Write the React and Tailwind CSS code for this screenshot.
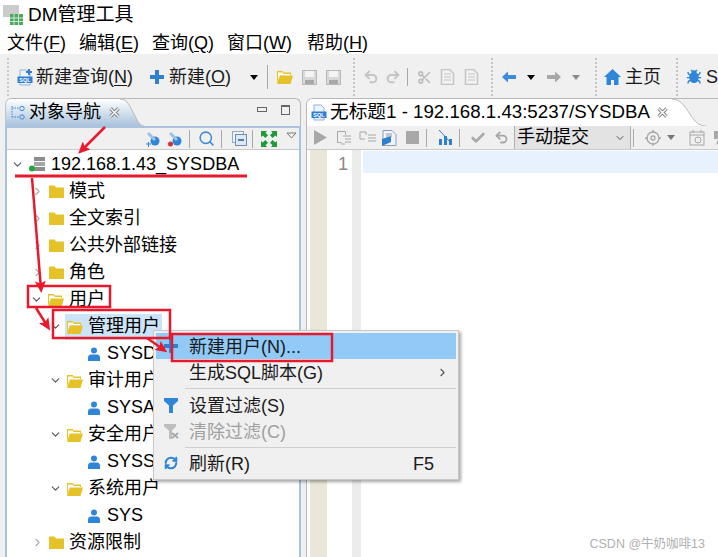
import React from 'react';
import { ChevronDown, ChevronRight, Bug, Check, Undo2, Redo2, Scissors, Search, RefreshCw } from 'lucide-react';

const FONT = "font-['Liberation_Sans','Noto_Sans_CJK_SC',sans-serif]";

const SqlDoc = ({ plus }) => (
  <svg width="16" height="17" viewBox="0 0 16 17" className="shrink-0">
    <path d="M3 1h7l3 3v12H3z" fill="#eef4fb" stroke="#8fb4dc" />
    <rect x="0.500" y="7.500" width="15" height="6.500" fill="#2f80d0" />
    <text x="8" y="12.600" fontSize="5.500" fontWeight="700" fill="#fff" textAnchor="middle" fontFamily="Liberation Sans">SQL</text>
    {plus && <path d="M12 0v6M9 3h6" stroke="#2f80d0" strokeWidth="2" />}
  </svg>
);

const Folder = ({ open }) =>
  open ? (
    <svg width="16" height="14" viewBox="0 0 16 14" className="shrink-0">
      <path d="M0 1h5.500l1.500 1.500h7V5H3L0 13z" fill="#e6c229" />
      <path d="M1 2.500h4.500l1.500 1.500h6v1H3l-2 5z" fill="#fff" />
      <path d="M0 14L3 5.500h13L13.500 14z" fill="#e6c229" />
    </svg>
  ) : (
    <svg width="15" height="13" viewBox="0 0 15 13" className="shrink-0">
      <path d="M0 0.500h5.500l1.500 2h8V13H0z" fill="#e6c229" />
    </svg>
  );

const UserIcon = () => (
  <svg width="12" height="14" viewBox="0 0 12 14" className="shrink-0">
    <circle cx="6" cy="3.500" r="3" fill="#2f86d8" />
    <path d="M0 14v-3.500C0 8.500 1.500 7.500 3 7.500h6c1.500 0 3 1 3 3V14z" fill="#2f86d8" />
  </svg>
);

const ServerIcon = () => (
  <svg width="16" height="15" viewBox="0 0 16 15" className="shrink-0">
    <rect x="5" y="0" width="11" height="4" fill="#8d8d8d" />
    <rect x="5" y="5" width="11" height="4" fill="#a6a6a6" />
    <rect x="5" y="10" width="11" height="4" fill="#8d8d8d" />
    <circle cx="3" cy="11.500" r="3" fill="#22a83a" />
  </svg>
);

const Floppy = ({ className }) => (
  <svg width="15" height="15" viewBox="0 0 15 15" className={className}>
    <rect x="0.500" y="0.500" width="14" height="14" fill="#d8d8d8" stroke="#b8b8b8" />
    <rect x="3" y="1" width="9" height="6" fill="#f4f4f4" />
    <rect x="3" y="10" width="9" height="4" fill="#a8a8a8" />
  </svg>
);

const DocLines = ({ className, stroke = '#c4c4c4' }) => (
  <svg width="15" height="16" viewBox="0 0 15 16" fill="#f2f2f2" stroke={stroke} className={className}>
    <path d="M1.500 0.500h8l4 4v11h-12z" strokeWidth="1.500" />
    <path d="M4 5h7M4 8h7M4 11h7" />
  </svg>
);

const Arrow = ({ className, fill, flip }) => (
  <svg width="14" height="12" viewBox="0 0 14 12" className={className}>
    <path d={flip ? 'M14 6L8 0.500V4H0v4h8v3.500z' : 'M0 6l6-5.500V4h8v4H6v3.500z'} fill={fill} />
  </svg>
);

const CloseX = ({ className }) => (
  <svg width="11" height="11" viewBox="0 0 11 11" className={className}>
    <path d="M1.500 1.500l8 8M9.500 1.500l-8 8" stroke="#808080" strokeWidth="3.200" />
    <path d="M1.500 1.500l8 8M9.500 1.500l-8 8" stroke="#fff" strokeWidth="1.400" />
  </svg>
);

const VSep = ({ className }) => <div className={`w-px h-[18px] bg-[#a8a8a8] shrink-0 ${className}`} />;
const Grip = ({ className }) => <div className={`w-0 h-[38px] border-l-2 border-dotted border-[#c6c6c6] shrink-0 ${className}`} />;
const Caret = ({ className, color = 'border-t-black' }) => (
  <div className={`w-0 h-0 border-x-[4.500px] border-x-transparent border-t-[5px] ${color} shrink-0 ${className}`} />
);

const Underlined = ({ pre, ch }) => (
  <>
    {pre}(<span className="underline underline-offset-2">{ch}</span>)
  </>
);

const TitleBar = () => (
  <div className="flex h-[27px] items-center pl-[3px] pt-[3px] gap-[5px] text-[19px] text-black">
    <svg width="20" height="20" viewBox="0 0 20 20">
      <rect x="0" y="0" width="16" height="12" fill="#b5b5b5" opacity="0.7" />
      <rect x="7" y="9" width="13" height="11" fill="#4fa860" />
      <path d="M7 13h13M7 16.500h13M11 9v11M15.500 9v11" stroke="#cfe8d4" />
    </svg>
    <span>DM管理工具</span>
  </div>
);

const MenuBar = () => (
  <div className="flex h-[27px] items-center pl-[7px] pt-[4px] gap-[13px] text-[18px] leading-none text-black">
    <span><Underlined pre="文件" ch="F" /></span>
    <span><Underlined pre="编辑" ch="E" /></span>
    <span><Underlined pre="查询" ch="Q" /></span>
    <span><Underlined pre="窗口" ch="W" /></span>
    <span className="ml-[2px]"><Underlined pre="帮助" ch="H" /></span>
  </div>
);

const MainToolbar = () => (
  <div className="flex h-[44px] items-center bg-[#f0f0f0] pl-[7px] pt-[2px] overflow-hidden text-[18px] text-[#1a1a1a] whitespace-nowrap">
    <Grip />
    <div className="ml-[8px]"><SqlDoc plus /></div>
    <span className="ml-[3px]"><Underlined pre="新建查询" ch="N" /></span>
    <svg className="ml-[17px] shrink-0" width="14" height="14" viewBox="0 0 14 14" fill="#2f80d0"><path d="M5 0h4v5h5v4H9v5H5V9H0V5h5z" /></svg>
    <span className="ml-[5px]"><Underlined pre="新建" ch="O" /></span>
    <Caret className="ml-[19px]" />
    <div className="w-px h-[24px] bg-[#a8a8a8] ml-[9px] shrink-0" />
    <div className="ml-[9px]"><Folder open /></div>
    <Floppy className="ml-[9px] shrink-0" />
    <Floppy className="ml-[9px] shrink-0" />
    <Grip className="ml-[12px]" />
    <Undo2 className="ml-[8px] text-[#c4c4c4] shrink-0" size={16} strokeWidth={3} />
    <Redo2 className="ml-[6px] text-[#c4c4c4] shrink-0" size={16} strokeWidth={3} />
    <VSep className="ml-[6px]" />
    <Scissors className="ml-[9px] text-[#bcbcbc] shrink-0" size={15} strokeWidth={2.500} />
    <DocLines className="ml-[8px] shrink-0" />
    <DocLines className="ml-[9px] shrink-0" />
    <Grip className="ml-[12px]" />
    <Arrow className="ml-[9px] shrink-0" fill="#3d8bdc" />
    <Caret className="ml-[11px]" />
    <Arrow className="ml-[12px] shrink-0" fill="#a8a8a8" flip />
    <Caret className="ml-[11px]" color="border-t-[#8a8a8a]" />
    <Grip className="ml-[15px]" />
    <svg className="ml-[7px] shrink-0" width="17" height="16" viewBox="0 0 17 16" fill="#2f86d8"><path d="M8.500 0L17 8h-2.500v8H10v-5H7v5H2.500V8H0z" /></svg>
    <span className="ml-[4px]">主页</span>
    <Grip className="ml-[15px]" />
    <Bug className="ml-[8px] text-[#2f86d8] shrink-0" size={16} fill="#2f86d8" />
    <span className="ml-[4px]">S</span>
  </div>
);

const NavPanel = ({ children }) => (
  <div className="w-[296px] shrink-0 flex flex-col ml-[5px]">
    <div className="flex h-[28px] border-t border-r border-[#b8b8b8] rounded-t-[6px]">
      <div className="flex h-full w-[115px] items-center gap-[3px] pl-[4px] rounded-tl-[6px] border-l border-[#b9c6d6] bg-gradient-to-b from-white to-[#a9c3dd] text-[18px] text-black shrink-0">
        <svg width="16" height="16" viewBox="0 0 16 16" fill="none" stroke="#3d8bdc" className="shrink-0">
          <path d="M2 1v11M2 3h7M2 12h7" strokeDasharray="1.500 1" />
          <circle cx="12" cy="3.500" r="2.200" />
          <circle cx="12" cy="12" r="2.200" />
        </svg>
        <span>对象导航</span>
        <CloseX className="ml-[5px] shrink-0" />
      </div>
      <svg width="24" height="27" viewBox="0 0 24 27" className="shrink-0">
        <defs>
          <linearGradient id="navtab" x1="0" y1="0" x2="0" y2="1">
            <stop offset="0" stopColor="#fff" />
            <stop offset="1" stopColor="#a9c3dd" />
          </linearGradient>
        </defs>
        <path d="M0 0C8 0 10 8 14 15C18 23 20 27 24 27H0z" fill="url(#navtab)" />
        <path d="M0 0C8 0 10 8 14 15C18 23 20 27 24 27" fill="none" stroke="#b8b8b8" />
      </svg>
      <div className="flex-1 flex h-full items-center justify-end gap-[14px] pr-[10px] pb-[6px]">
        <div className="w-[10px] h-[5px] border border-[#666]" />
        <div className="w-[9px] h-[10px] border border-[#666] border-t-2" />
      </div>
    </div>
    <div className="flex-1 flex flex-col border-x-[2px] border-t-[2px] border-[#a9c3dd] bg-white min-h-0">
      <div className="flex h-[22px] items-center justify-end pr-[2px] bg-[#f0f0f0] border-b border-[#c8c8c8]">
        <svg width="16" height="16" viewBox="0 0 16 16"><circle cx="10" cy="10" r="4.500" fill="#2f86d8" /><path d="M3 2l7 7" stroke="#9bc2e8" strokeWidth="3" /><path d="M1 13h5M3.500 11v5" stroke="#2f86d8" /></svg>
        <svg className="ml-[6px]" width="16" height="16" viewBox="0 0 16 16"><circle cx="10" cy="10" r="4.500" fill="#2f86d8" /><path d="M3 2l7 7" stroke="#9bc2e8" strokeWidth="3" /><circle cx="3.500" cy="13" r="2.500" fill="#d43040" /></svg>
        <VSep className="ml-[6px]" />
        <Search size={17} className="ml-[8px] text-[#3d8bdc]" strokeWidth={2.200} />
        <VSep className="ml-[6px]" />
        <svg className="ml-[10px]" width="15" height="15" viewBox="0 0 15 15"><rect x="0.500" y="0.500" width="11" height="11" fill="#eef4fb" stroke="#8fa8c4" /><rect x="3.500" y="3.500" width="11" height="11" fill="#dbe8f5" stroke="#6f8fb0" /><path d="M6 9h6" stroke="#2a5a8a" strokeWidth="1.500" /></svg>
        <VSep className="ml-[5px]" />
        <svg className="ml-[8px]" width="16" height="16" viewBox="0 0 16 16" fill="#1f9a35"><path d="M0 0h6L4.500 1.800 7 4.300 4.300 7 1.800 4.500 0 6zM16 0v6l-1.800-1.500L11.700 7 9 4.300l2.500-2.500L10 0zM0 16v-6l1.800 1.500L4.300 9 7 11.700l-2.500 2.500L6 16zM16 16h-6l1.500-1.800L9 11.700 11.700 9l2.500 2.500L16 10z" /></svg>
        <svg className="ml-[9px] mb-[7px]" width="11" height="7" viewBox="0 0 11 7" fill="none" stroke="#777"><path d="M1 1h9L5.500 6z" /></svg>
      </div>
      {children}
    </div>
  </div>
);

const TreeRow = ({ indent, arrow, icon, label, selected, gap = 'gap-[5px]' }) => (
  <div className="flex h-[27px] items-center whitespace-nowrap text-[18px] text-black" style={{ paddingLeft: indent }}>
    <span className="w-[14px] flex justify-center shrink-0">
      {arrow === 'down' && <ChevronDown size={13} className="text-[#555]" strokeWidth={2} />}
      {arrow === 'right' && <ChevronRight size={13} className="text-[#aaa]" strokeWidth={2} />}
    </span>
    <span className={`ml-[3px] flex items-center h-[26px] pl-[2px] pr-[2px] ${gap} ${selected ? 'bg-[#cce4f7]' : ''}`}>
      {icon}
      <span>{label}</span>
    </span>
  </div>
);

const Tree = () => (
  <div className="flex flex-col pt-[1px] overflow-hidden">
    <TreeRow indent={3} arrow="down" gap="gap-[6px]" icon={<ServerIcon />} label="192.168.1.43_SYSDBA" />
    <TreeRow indent={23} arrow="right" icon={<Folder />} label="模式" />
    <TreeRow indent={23} arrow="right" icon={<Folder />} label="全文索引" />
    <TreeRow indent={23} arrow="right" icon={<Folder />} label="公共外部链接" />
    <TreeRow indent={23} arrow="right" icon={<Folder />} label="角色" />
    <TreeRow indent={22} arrow="down" icon={<Folder open />} label="用户" />
    <TreeRow indent={41} arrow="down" selected icon={<Folder open />} label="管理用户" />
    <TreeRow indent={62} gap="gap-[7px]" icon={<UserIcon />} label="SYSDBA" />
    <TreeRow indent={41} arrow="down" icon={<Folder open />} label="审计用户" />
    <TreeRow indent={62} gap="gap-[7px]" icon={<UserIcon />} label="SYSAUD" />
    <TreeRow indent={41} arrow="down" icon={<Folder open />} label="安全用户" />
    <TreeRow indent={62} gap="gap-[7px]" icon={<UserIcon />} label="SYSSSO" />
    <TreeRow indent={41} arrow="down" icon={<Folder open />} label="系统用户" />
    <TreeRow indent={62} gap="gap-[7px]" icon={<UserIcon />} label="SYS" />
    <TreeRow indent={23} arrow="right" icon={<Folder />} label="资源限制" />
  </div>
);

const EditorPanel = () => (
  <div className="flex-1 min-w-0 flex flex-col ml-[5px] border-l border-[#b8b8b8] rounded-tl-[6px]">
    <div className="flex h-[28px] border-t border-[#b8b8b8] rounded-tl-[6px] overflow-hidden">
      <div className="flex h-full w-[365px] items-center pl-[4px] gap-[3px] bg-white text-[18.700px] text-black whitespace-nowrap shrink-0">
        <SqlDoc />
        <span>无标题1 - 192.168.1.43:5237/SYSDBA</span>
        <CloseX className="ml-[4px] shrink-0" />
      </div>
      <svg width="34" height="27" viewBox="0 0 34 27" className="shrink-0">
        <path d="M0 0C10 0 14 10 20 18C24 24 28 27 34 27H0z" fill="#fff" />
        <path d="M0 0C10 0 14 10 20 18C24 24 28 27 34 27" fill="none" stroke="#b8b8b8" />
      </svg>
    </div>
    <div className="flex h-[24px] items-center bg-[#f0f0f0] border-b border-[#c8c8c8] pl-[7px] whitespace-nowrap overflow-hidden">
      <svg width="13" height="15" viewBox="0 0 13 15" fill="#a8a8a8" className="shrink-0"><path d="M0 0l13 7.500L0 15z" /></svg>
      <svg className="ml-[9px] shrink-0" width="16" height="16" viewBox="0 0 16 16" fill="none" stroke="#a8a8a8"><path d="M1.500 1.500h8v3M1.500 1.500v11h4M7 6h8M9 9h6M9 12h6M5 14h4" /></svg>
      <svg className="ml-[7px] shrink-0" width="18" height="14" viewBox="0 0 18 14" fill="none" stroke="#a8a8a8"><path d="M1 1h6v3M1 1v7h5M9 4h8M9 7h8M9 10h8" /></svg>
      <svg className="ml-[5px] shrink-0" width="15" height="16" viewBox="0 0 15 16"><path d="M1 0.500h9l4 4v11H1z" fill="#f0f4f8" stroke="#8a9db5" /><path d="M0 9l9-3v6l-9 4z" fill="#2f80d0" /><path d="M4 4h6M4 6h6" stroke="#8a9db5" /></svg>
      <div className="ml-[9px] w-[13px] h-[13px] bg-[#a8a8a8] shrink-0" />
      <VSep className="ml-[7px]" />
      <svg className="ml-[11px] shrink-0" width="15" height="15" viewBox="0 0 15 15" fill="#2f80d0"><rect x="1" y="9" width="3" height="6" /><rect x="6" y="6" width="3" height="9" /><rect x="11" y="9" width="3" height="6" /><path d="M1 0l13 14" stroke="#2f80d0" /></svg>
      <VSep className="ml-[6px]" />
      <Check size={16} className="ml-[10px] text-[#a8a8a8] shrink-0" strokeWidth={4} />
      <Undo2 size={15} className="ml-[8px] text-[#a8a8a8] shrink-0" strokeWidth={3} />
      <div className="ml-[5px] flex h-[23px] w-[117px] items-center justify-between pl-[2px] pr-[3px] bg-[#e3e3e3] border-x border-[#b0b0b0] text-[18px] text-black shrink-0">
        <span>手动提交</span>
        <ChevronDown size={12} className="text-[#555] mr-[1px]" />
      </div>
      <VSep className="ml-[2px]" />
      <svg className="ml-[11px] shrink-0" width="16" height="16" viewBox="0 0 16 16" fill="none" stroke="#a8a8a8" strokeWidth="1.300"><circle cx="8" cy="8" r="6" /><circle cx="8" cy="8" r="2" /><path d="M8 0v3M8 13v3M0 8h3M13 8h3" /></svg>
      <Caret className="ml-[6px]" color="border-t-[#777]" />
      <svg className="ml-[14px] shrink-0" width="16" height="16" viewBox="0 0 16 16" fill="none" stroke="#a8a8a8"><rect x="1" y="2" width="14" height="13" /><path d="M1 5h14M4 0v3M12 0v3" /><circle cx="9" cy="10" r="3" /></svg>
      <svg className="ml-[7px] shrink-0" width="12" height="14" viewBox="0 0 12 14" fill="#a8a8a8"><path d="M2 0h10L9 7h3l-8 7 2-6H2z" /></svg>
    </div>
    <div className="flex-1 flex bg-white pl-[3px]">
      <div className="w-[17px] bg-[#eae7d8] shrink-0" />
      <div className="w-[25px] shrink-0 flex justify-end items-start pt-[1px] pr-[4px] text-[18px] text-[#8a8a8a]">1</div>
      <div className="w-[9px] bg-[#ececec] shrink-0" />
      <div className="flex-1 flex flex-col pl-[2px]">
        <div className="h-[22px] mt-[1px] bg-[#e8f2fe]" />
      </div>
    </div>
  </div>
);

const MenuItem = ({ icon, label, right, disabled, active }) => (
  <div className={`flex h-[26px] items-center whitespace-nowrap text-[18px] ${disabled ? 'text-[#a0a0a0]' : 'text-[#1a1a1a]'} ${active ? 'bg-[#91c9f7]' : ''}`}>
    <span className="w-[30px] flex justify-center shrink-0">{icon}</span>
    <span className="ml-[3px] pt-[2px] flex-1">{label}</span>
    {right}
  </div>
);

const ContextMenu = () => (
  <div className="absolute left-[153px] top-[330px] w-[306px] h-[150px] bg-[#f0f0f0] border border-[#c8c8c8] shadow-[2px_2px_3px_rgba(0,0,0,0.35)] px-[2px] pt-[2px]">
    <MenuItem active label="新建用户(N)..." icon={<svg width="14" height="14" viewBox="0 0 14 14" fill="#2f80d0"><path d="M5 0h4v5h5v4H9v5H5V9H0V5h5z" /></svg>} />
    <MenuItem label="生成SQL脚本(G)" right={<ChevronRight size={13} className="mr-[7px] text-[#555]" />} />
    <div className="ml-[29px] h-px bg-[#cfcfcf] my-[3px]" />
    <MenuItem label="设置过滤(S)" icon={<svg width="14" height="15" viewBox="0 0 14 15" fill="#2f86d8"><path d="M0 0h14v3L9 7.500V15H5V7.500L0 3z" /></svg>} />
    <MenuItem disabled label="清除过滤(C)" icon={<svg width="15" height="15" viewBox="0 0 15 15"><path d="M0 0h12v2.500L8 6.500V15H5V6.500L0 2.500z" fill="#bdbdbd" /><path d="M8 9l6 5M14 9l-6 5" stroke="#a8a8a8" strokeWidth="1.800" /></svg>} />
    <div className="ml-[29px] h-px bg-[#cfcfcf] mt-[3px] mb-[2px]" />
    <MenuItem label="刷新(R)" icon={<RefreshCw size={14} strokeWidth={3.500} className="text-[#2f86d8]" />} right={<span className="mr-[22px] pt-[2px]">F5</span>} />
  </div>
);

const Marks = () => (
  <svg className="absolute left-0 top-0 pointer-events-none" width="718" height="557" viewBox="0 0 718 557">
    <defs>
      <marker id="head" markerUnits="userSpaceOnUse" markerWidth="12" markerHeight="11" refX="8" refY="5.500" orient="auto">
        <path d="M0 0L12 5.500L0 11L2.500 5.500z" fill="#e8192c" />
      </marker>
    </defs>
    <g stroke="#e8192c" strokeWidth="2.500" fill="none">
      <path d="M105 127L81 151" markerEnd="url(#head)" />
      <path d="M15 176H247" strokeWidth="3" />
      <path d="M32 178L41 289" markerEnd="url(#head)" />
      <rect x="28" y="286" width="82" height="21" />
      <path d="M36 308L48 327" markerEnd="url(#head)" />
      <rect x="53" y="310" width="117" height="28" />
      <path d="M147 338L164 350" markerEnd="url(#head)" />
      <rect x="172" y="334" width="160" height="27" />
    </g>
  </svg>
);

export default function App() {
  return (
    <div className={`relative w-[718px] h-[557px] overflow-hidden bg-white flex flex-col ${FONT}`}>
      <TitleBar />
      <MenuBar />
      <MainToolbar />
      <div className="flex-1 flex min-h-0 bg-[#f0f0f0]">
        <NavPanel><Tree /></NavPanel>
        <EditorPanel />
      </div>
      <ContextMenu />
      <Marks />
      <span className="absolute right-[13px] bottom-[3px] text-[12.500px] text-[#b0b0b0]">CSDN @牛奶咖啡13</span>
    </div>
  );
}
